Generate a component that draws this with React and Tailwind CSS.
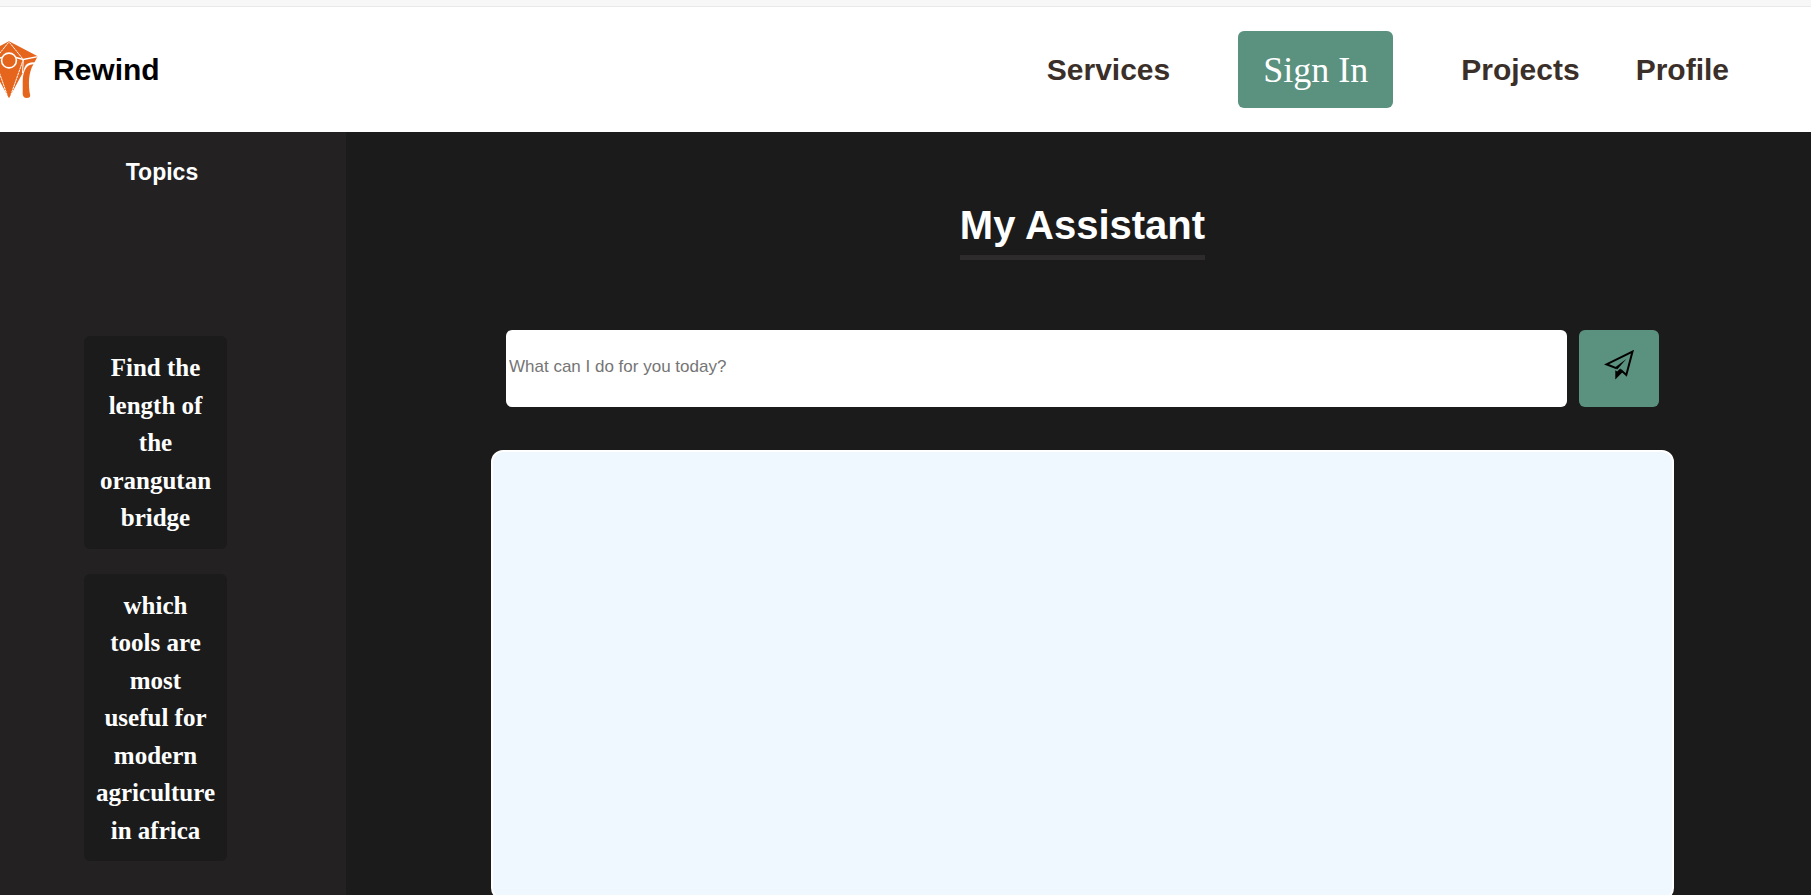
const topics = [
  "Find the length of the orangutan bridge",
  "which tools are most useful for modern agriculture in africa",
];

function LogoHalf() {
  return (
    <>
      <path d="M30 1.200 58.700 16.200 55.500 22.300Q47 22.500 45.700 27L43.700 33 30 58.200Z" fill="#e5651c" />
      <path
        d="M54.500 24.300C46.500 24 44 33 43.700 41V54.500Q44.500 58 47.500 58Q51.200 58 51.200 55.500C49 45 49.500 32 54.500 24.300Z"
        fill="#e5651c"
      />
      <g fill="none" stroke="#fff">
        <path d="M30.500 2.500 44.300 19.500 32 54.500" strokeWidth="1" strokeDasharray="2.500 .5" />
        <path d="M37 17.500 44.300 19.500 58.700 16.700" strokeWidth="1.300" />
        <path d="M44.300 19.500 43.500 33" strokeWidth="1" />
      </g>
    </>
  );
}

function Logo() {
  return (
    <svg viewBox="0 0 60 60" className="-ml-[21px] h-[60px] w-[60px] shrink-0" aria-hidden="true">
      <LogoHalf />
      <g transform="matrix(-1 0 0 1 60 0)">
        <LogoHalf />
      </g>
      <circle cx="30" cy="20.500" r="7.400" fill="#e5651c" stroke="#fff" strokeWidth="1.600" />
    </svg>
  );
}

function SendIcon() {
  return (
    <svg viewBox="0 0 30 30" className="h-[30px] w-[30px]" aria-hidden="true">
      <path
        d="M12.800 18.400 2.500 14.300 28.500 1.600 22.300 25 16.800 20"
        fill="none"
        stroke="#000"
        strokeWidth="2"
      />
      <path d="M11.500 17 22.300 9 13.200 19.600Z" />
      <path d="M11.300 20.300 13.200 21.600 16.300 18.500 18.500 22.300 11.300 29.500Z" />
    </svg>
  );
}

export default function App() {
  return (
    <div className="flex h-screen flex-col bg-[#1b1b1b] font-['Liberation_Sans',Arial,sans-serif]">
      <div className="h-[7px] shrink-0 border-b border-[#e9e9e9] bg-[#f7f7f7]" />
      <header className="flex h-[125px] shrink-0 items-center justify-between bg-white pr-[82px] text-[30px] font-bold">
        <a href="#home" className="flex items-center gap-[14px] text-black">
          <Logo />
          <span>Rewind</span>
        </a>
        <nav className="flex items-center gap-14 text-[#3b2f2a]">
          <a href="#services">Services</a>
          <button
            type="button"
            className="mx-3 h-[77px] rounded-md bg-[#5b917f] px-[25px] font-['Liberation_Serif','Times_New_Roman',serif] text-4xl font-normal text-white"
          >
            Sign In
          </button>
          <a href="#projects">Projects</a>
          <a href="#profile">Profile</a>
        </nav>
      </header>

      <div className="flex min-h-0 grow">
        <aside className="w-[346px] shrink-0 overflow-y-auto bg-[#232122] pr-[22px] text-white [scrollbar-width:none]">
          <h2 className="pt-6 text-center text-[23px] leading-8 font-bold">Topics</h2>
          <ul className="mt-[148px] flex flex-col gap-[25px] pl-[84px]">
            {topics.map((topic) => (
              <li key={topic}>
                <button
                  type="button"
                  className="block w-[143px] rounded-md bg-[#1b1b1b] px-3 pt-[13px] pb-3 text-center font-['Liberation_Serif','Times_New_Roman',serif] text-[25px] leading-normal font-bold"
                >
                  {topic}
                </button>
              </li>
            ))}
          </ul>
        </aside>

        <main className="flex grow flex-col overflow-y-auto pr-[137px] pl-[145px] [scrollbar-width:none]">
          <h1 className="mt-[67px] self-center border-b-[5px] border-[#2d2b2c] pb-1 text-[40px] leading-[52px] font-bold text-white">
            My Assistant
          </h1>
          <form className="mx-[15px] mt-[70px] flex gap-3" onSubmit={(e) => e.preventDefault()}>
            <input
              type="text"
              aria-label="Prompt"
              placeholder="What can I do for you today?"
              className="h-[77px] min-w-0 grow rounded-md bg-white px-[3px] pb-1 text-[17px] text-black placeholder:text-[#757575]"
            />
            <button
              type="submit"
              aria-label="Send"
              className="flex h-[77px] w-20 items-center justify-center rounded-md bg-[#5b917f] pb-2"
            >
              <SendIcon />
            </button>
          </form>
          <section
            aria-label="Response"
            className="mt-[43px] h-[450px] shrink-0 rounded-xl border-2 border-white bg-[#f0f8ff]"
          />
        </main>
      </div>
    </div>
  );
}
